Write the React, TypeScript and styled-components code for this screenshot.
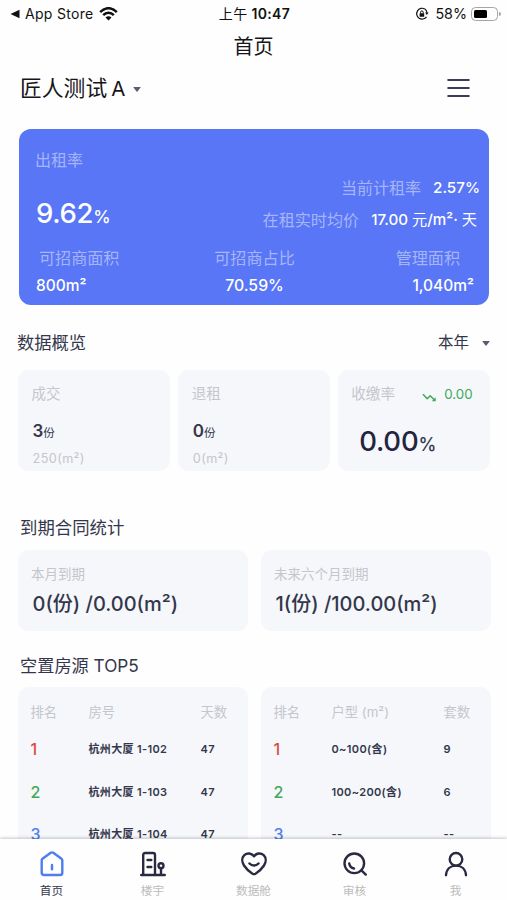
import React from "react";
import styled, { createGlobalStyle } from "styled-components";

const ink = "#34374b";
const muted = "#c5c6cc";
const blue = "#4d7df0";
const red = "#dc4b43";
const green = "#41a857";

const GlobalStyle = createGlobalStyle`
  * { box-sizing: border-box; }
  body { margin: 0; background: #fefefe; }
`;

const Screen = styled.div`
  width: 507px;
  height: 900px;
  overflow: hidden;
  display: flex;
  flex-direction: column;
  background: #fefefe;
  color: ${ink};
  font-family: Inter, "Noto Sans CJK SC", sans-serif;
  white-space: nowrap;
`;

interface TextProps {
  $size: number;
  $color?: string;
  $weight?: number;
  $spacing?: number;
}

const Text = styled.span<TextProps>`
  font-size: ${(p) => p.$size}px;
  line-height: 20px;
  color: ${(p) => p.$color ?? "inherit"};
  font-weight: ${(p) => p.$weight ?? 400};
  letter-spacing: ${(p) => p.$spacing ?? 0}px;
`;

const Light = styled.span`
  font-weight: 400;
`;

const StatusBar = styled.div`
  height: 28px;
  display: grid;
  grid-template-columns: 1fr auto 1fr;
  align-items: center;
  padding: 0 6px 0 10px;
  color: #111;
`;

const StatusSide = styled.div<{ $end?: boolean }>`
  display: flex;
  align-items: center;
  justify-content: ${(p) => (p.$end ? "flex-end" : "flex-start")};
`;

const Battery = styled.div`
  width: 27px;
  height: 14px;
  margin-left: 4px;
  padding: 2px;
  border: 1px solid #a5a5a5;
  border-radius: 4.5px;
`;

const BatteryLevel = styled.div`
  width: 13px;
  height: 8px;
  border-radius: 1.5px;
  background: #000;
`;

const BatteryCap = styled.div`
  width: 2px;
  height: 4px;
  margin-left: 1px;
  border-radius: 0 2px 2px 0;
  background: #a5a5a5;
`;

const TitleBar = styled.header`
  height: 36px;
  padding-top: 1px;
  display: flex;
  justify-content: center;
  align-items: center;
  color: #16161a;
`;

const ProjectBar = styled.div`
  height: 48px;
  padding: 0 37px 0 20px;
  display: flex;
  align-items: center;
  color: #16161a;
`;

const ProjectName = styled.div`
  display: flex;
  align-items: baseline;
  gap: 4px;
  padding-top: 1px;
`;

const MenuButton = styled.button`
  display: flex;
  margin-left: auto;
  padding: 0;
  border: 0;
  background: none;
`;

const Caret = styled.span<{ $gap: number }>`
  margin-top: 2px;
  margin-left: ${(p) => p.$gap}px;
  border: solid transparent;
  border-width: 5px 4.5px 0;
  border-top-color: #5a5d70;
  border-radius: 1px;
`;

const RentCard = styled.section`
  width: 470px;
  height: 176px;
  margin: 17px 0 0 19px;
  padding: 21px 9px 0 16px;
  border-radius: 12px;
  background: #5876f5;
  color: #fff;
`;

const RentMain = styled.div`
  display: flex;
  justify-content: space-between;
  height: 97.5px;
`;

const Stack = styled.div`
  display: flex;
  flex-direction: column;
`;

const RentRates = styled(Stack)`
  align-items: flex-end;
  gap: 12px;
  padding-top: 28px;
`;

const Figure = styled.div<{ $top: number; $left: number }>`
  display: flex;
  align-items: baseline;
  margin: ${(p) => p.$top}px 0 0 ${(p) => p.$left}px;
`;

const Pair = styled.div<{ $end?: number }>`
  display: flex;
  gap: 12px;
  margin-right: ${(p) => p.$end ?? 0}px;
`;

const RentTotals = styled.div`
  display: grid;
  grid-template-columns: 1fr auto 1fr;
  padding-right: 6px;
`;

const Total = styled(Stack)<{ $align: string }>`
  align-items: ${(p) => p.$align};
  gap: 8px;
`;

const Indent = styled.div<{ $left?: number; $right?: number }>`
  display: flex;
  padding: 0 ${(p) => p.$right ?? 0}px 0 ${(p) => p.$left ?? 0}px;
`;

const SectionHead = styled.div<{ $top: number; $left: number; $bottom: number }>`
  height: 20px;
  margin: ${(p) => p.$top}px 17px ${(p) => p.$bottom}px ${(p) => p.$left}px;
  display: flex;
  align-items: center;
`;

const Period = styled.div`
  display: flex;
  align-items: center;
  margin-left: auto;
`;

const CardRow = styled.div<{ $cols: number; $gap: number }>`
  display: grid;
  grid-template-columns: repeat(${(p) => p.$cols}, 1fr);
  gap: ${(p) => p.$gap}px;
  padding: 0 16.5px 0 17.5px;
`;

const Card = styled.article<{ $height: number; $pad: string }>`
  height: ${(p) => p.$height}px;
  padding: ${(p) => p.$pad};
  border-radius: 11px;
  background: #f5f7fb;
  display: flex;
  flex-direction: column;
`;

const RateHead = styled.div`
  display: flex;
  align-items: center;
  gap: 7px;
`;

const Trend = styled.svg`
  margin: 7px 0 0 20px;
`;

const TableRow = styled.div<{ $height: number }>`
  display: grid;
  grid-template-columns: 58px 112px 1fr;
  align-items: center;
  flex: none;
  height: ${(p) => p.$height}px;
`;

const Scroll = styled.main`
  height: 839px;
  flex: none;
  overflow: hidden;
`;

const TabBar = styled.nav`
  height: 61px;
  flex: none;
  display: grid;
  grid-template-columns: repeat(5, 101px);
  padding-left: 1px;
  background: #fefefe;
  box-shadow: 0 -1px 3px rgba(0, 0, 0, 0.22);
  z-index: 1;
`;

const Tab = styled.a`
  display: flex;
  flex-direction: column;
  align-items: center;
  padding-top: 10.5px;
  gap: 3px;
`;

const TabIcon = styled.svg<{ $color?: string }>`
  width: 28px;
  height: 28px;
  fill: none;
  stroke: ${(p) => p.$color ?? "#292944"};
  stroke-width: 2.4;
  stroke-linecap: round;
  stroke-linejoin: round;
`;

const rankColors = [red, green, blue];

interface RankingProps {
  headers: string[];
  rows: string[][];
}

function Ranking({ headers, rows }: RankingProps) {
  return (
    <Card $height={180} $pad="9.5px 0 0 13px">
      <TableRow $height={30}>
        {headers.map((h) => (
          <Text key={h} $size={13.3} $color={muted}>{h}</Text>
        ))}
      </TableRow>
      {rows.map((r, i) => (
        <TableRow key={i} $height={i === 0 ? 44 : 42.5}>
          <Text $size={16} $weight={500} $color={rankColors[i]}>{i + 1}</Text>
          <Text $size={11} $weight={600} $spacing={0.35}>{r[0]}</Text>
          <Text $size={11} $weight={600} $spacing={0.35}>{r[1]}</Text>
        </TableRow>
      ))}
    </Card>
  );
}

const pale = "#a6b5fa";

export default function App() {
  return (
    <Screen>
      <GlobalStyle />
      <Scroll>
        <StatusBar>
          <StatusSide>
            <svg width="10" height="10" viewBox="0 0 10 10"><path d="M0.5 5 9.5 0.8v8.4z" fill="#111" /></svg>
            <Indent $left={5} $right={6}><Text $size={14} $spacing={0.3}>App Store</Text></Indent>
            <svg width="19" height="14" viewBox="0 0 19 14" fill="none" stroke="#111" strokeWidth="2.5">
              <path d="M1.2 5.2C6-0.2 13-0.2 17.8 5.2M4.2 8.2c3.1-3.2 7.5-3.2 10.6 0" />
              <path d="M9.5 13.6 6.5 10.6c1.7-1.7 4.3-1.7 6 0z" fill="#111" stroke="none" />
            </svg>
          </StatusSide>
          <Indent $right={2}><Text $size={14} $weight={600} $spacing={0.35}><Light>上午</Light> 10:47</Text></Indent>
          <StatusSide $end>
            <svg width="14" height="14" viewBox="0 0 14 14" fill="none" stroke="#111" strokeWidth="1.2">
              <path d="M9.8 2A5.4 5.4 0 1 0 11.500 9.800" />
              <path d="m10 5.500 1.900 2.600L13.600 5.500z" fill="#111" stroke="none" />
              <path d="M9.800 2q1.900 1.200 2.200 3.800" />
              <rect x="4.6" y="6.2" width="4.6" height="3.6" rx=".5" fill="#111" stroke="none" />
              <path d="M5.6 6.5V5.2a1.3 1.3 0 0 1 2.6 0v1.3" strokeWidth="1" />
            </svg>
            <Indent $left={6}><Text $size={14.3}>58%</Text></Indent>
            <Battery><BatteryLevel /></Battery>
            <BatteryCap />
          </StatusSide>
        </StatusBar>

        <TitleBar><Text $size={20}>首页</Text></TitleBar>

        <ProjectBar>
          <ProjectName>
            <Text $size={21.8}>匠人测试</Text>
            <Text $size={20.5}>A</Text>
          </ProjectName>
          <Caret $gap={8} />
          <MenuButton aria-label="menu">
            <svg width="23" height="20" viewBox="0 0 23 20" stroke="#3c3b5a" strokeWidth="2.2" strokeLinecap="round">
              <path d="M1.3 2h20.4M1.3 10h20.4M1.3 18h20.4" />
            </svg>
          </MenuButton>
        </ProjectBar>

        <RentCard>
          <RentMain>
            <Stack>
              <Text $size={16} $color={pale}>出租率</Text>
              <Figure $top={33} $left={1}>
                <Text $size={27.5} $weight={500} $spacing={-0.3}>9.62</Text>
                <Text $size={17.5} $weight={500}>%</Text>
              </Figure>
            </Stack>
            <RentRates>
              <Pair>
                <Text $size={16} $color={pale}>当前计租率</Text>
                <Text $size={15.2} $weight={500}>2.57%</Text>
              </Pair>
              <Pair $end={3}>
                <Text $size={16.1} $color={pale}>在租实时均价</Text>
                <Text $size={15.2} $weight={500}>17.00 <Light>元</Light>/m²· <Light>天</Light></Text>
              </Pair>
            </RentRates>
          </RentMain>
          <RentTotals>
            <Total $align="flex-start">
              <Indent $left={4}><Text $size={16.1} $color={pale}>可招商面积</Text></Indent>
              <Indent $left={1}><Text $size={15.5} $weight={500}>800m²</Text></Indent>
            </Total>
            <Total $align="center">
              <Text $size={16.1} $color={pale}>可招商占比</Text>
              <Text $size={15.8} $weight={500}>70.59%</Text>
            </Total>
            <Total $align="flex-end">
              <Indent $right={14}><Text $size={16.1} $color={pale}>管理面积</Text></Indent>
              <Text $size={15.5} $weight={500}>1,040m²</Text>
            </Total>
          </RentTotals>
        </RentCard>

        <SectionHead $top={27.5} $left={17} $bottom={17.5}>
          <Text $size={17.3}>数据概览</Text>
          <Period>
            <Text $size={15.5}>本年</Text>
            <Caret $gap={13} />
          </Period>
        </SectionHead>
        <CardRow $cols={3} $gap={8}>
          <Card $height={101} $pad="13.5px 14px">
            <Text $size={14.5} $color={muted}>成交</Text>
            <Figure $top={17} $left={1}>
              <Text $size={17} $weight={600}>3</Text>
              <Text $size={11.5}>份</Text>
            </Figure>
            <Figure $top={6} $left={1}><Text $size={12.7} $color={muted} $spacing={0.4}>250(m²)</Text></Figure>
          </Card>
          <Card $height={101} $pad="13.5px 14px">
            <Text $size={14.5} $color={muted}>退租</Text>
            <Figure $top={17} $left={1}>
              <Text $size={17} $weight={600}>0</Text>
              <Text $size={11.5}>份</Text>
            </Figure>
            <Figure $top={6} $left={1}><Text $size={12.7} $color={muted} $spacing={0.4}>0(m²)</Text></Figure>
          </Card>
          <Card $height={101} $pad="14px 13px">
            <RateHead>
              <Text $size={14.7} $color={muted}>收缴率</Text>
              <Trend width="15" height="9" viewBox="0 0 15 9" fill="none" stroke={green} strokeWidth="1.5" strokeLinejoin="round">
                <path d="M1 1.3 5.2 5.8 8.2 2.7 13 7.5" />
                <path d="M13.7 4.3v4H9.8z" fill={green} stroke="none" />
              </Trend>
              <Text $size={13.3} $color={green}>0.00</Text>
            </RateHead>
            <Figure $top={27} $left={8}>
              <Text $size={27.5} $weight={500} $spacing={-0.2} $color="#25243f">0.00</Text>
              <Text $size={18} $weight={500}>%</Text>
            </Figure>
          </Card>
        </CardRow>

        <SectionHead $top={47} $left={20} $bottom={12}>
          <Text $size={17.4}>到期合同统计</Text>
        </SectionHead>
        <CardRow $cols={2} $gap={13}>
          <Card $height={81} $pad="14px 13.5px">
            <Text $size={13.5} $color={muted}>本月到期</Text>
            <Figure $top={10} $left={1.5}><Text $size={20} $weight={500}>0(份) /0.00(m²)</Text></Figure>
          </Card>
          <Card $height={81} $pad="14px 13.5px">
            <Text $size={13.5} $color={muted}>未来六个月到期</Text>
            <Figure $top={10} $left={1.5}><Text $size={20} $weight={500}>1(份) /100.00(m²)</Text></Figure>
          </Card>
        </CardRow>

        <SectionHead $top={25} $left={20} $bottom={11}>
          <Text $size={17.2}>空置房源 TOP5</Text>
        </SectionHead>
        <CardRow $cols={2} $gap={13}>
          <Ranking
            headers={["排名", "房号", "天数"]}
            rows={[["杭州大厦 1-102", "47"], ["杭州大厦 1-103", "47"], ["杭州大厦 1-104", "47"]]}
          />
          <Ranking
            headers={["排名", "户型 (m²)", "套数"]}
            rows={[["0~100(含)", "9"], ["100~200(含)", "6"], ["--", "--"]]}
          />
        </CardRow>
      </Scroll>

      <TabBar>
        <Tab>
          <TabIcon viewBox="0 0 28 28" $color={blue}>
            <path d="M3.7 10.4q0-1 .8-1.6l8.2-6q1.3-.9 2.6 0l8.2 6q.8.6.8 1.6v12.3q0 2.3-2.3 2.3H6q-2.3 0-2.3-2.3z" />
            <path d="M14 15v4.3" />
          </TabIcon>
          <Text $size={11.7}>首页</Text>
        </Tab>
        <Tab>
          <TabIcon viewBox="0 0 28 28">
            <path d="M2.2 25h23.6M4.2 25V5q0-2 2-2H14q2 0 2 2v20M8.5 10h3.8M8.5 17h3.8M22 18v7" />
            <circle cx="22" cy="15.8" r="2.5" />
          </TabIcon>
          <Text $size={11.7} $color="#bcbcbc">楼宇</Text>
        </Tab>
        <Tab>
          <TabIcon viewBox="0 0 28 28">
            <path d="M14 6.2C11.5 2.8 7 2.8 4.3 5.2 1.4 8 2 12.5 4 15.500c2 3 6 6.800 8.500 8.200q1.500.8 3 0c2.500-1.400 6.500-5.200 8.500-8.200 2-3 2.600-7.500-.300-10.300C21 2.800 16.500 2.800 14 6.200z" />
            <path d="M9.500 13.500c2.500 2.700 6.500 2.700 9 0" />
          </TabIcon>
          <Text $size={11.7} $color="#bcbcbc">数据舱</Text>
        </Tab>
        <Tab>
          <TabIcon viewBox="0 0 28 28">
            <circle cx="13.300" cy="13.300" r="9.800" />
            <path d="m20.400 20.400 4.400 4.200M8.200 13.500q.8 4.200 4.800 5" />
          </TabIcon>
          <Text $size={11.7} $color="#bcbcbc">审核</Text>
        </Tab>
        <Tab>
          <TabIcon viewBox="0 0 28 28">
            <circle cx="14" cy="9.300" r="6.300" />
            <path d="M4 25.200c.5-6.200 4.700-9.600 10-9.600s9.500 3.400 10 9.600" />
          </TabIcon>
          <Text $size={11.7} $color="#bcbcbc">我</Text>
        </Tab>
      </TabBar>
    </Screen>
  );
}
